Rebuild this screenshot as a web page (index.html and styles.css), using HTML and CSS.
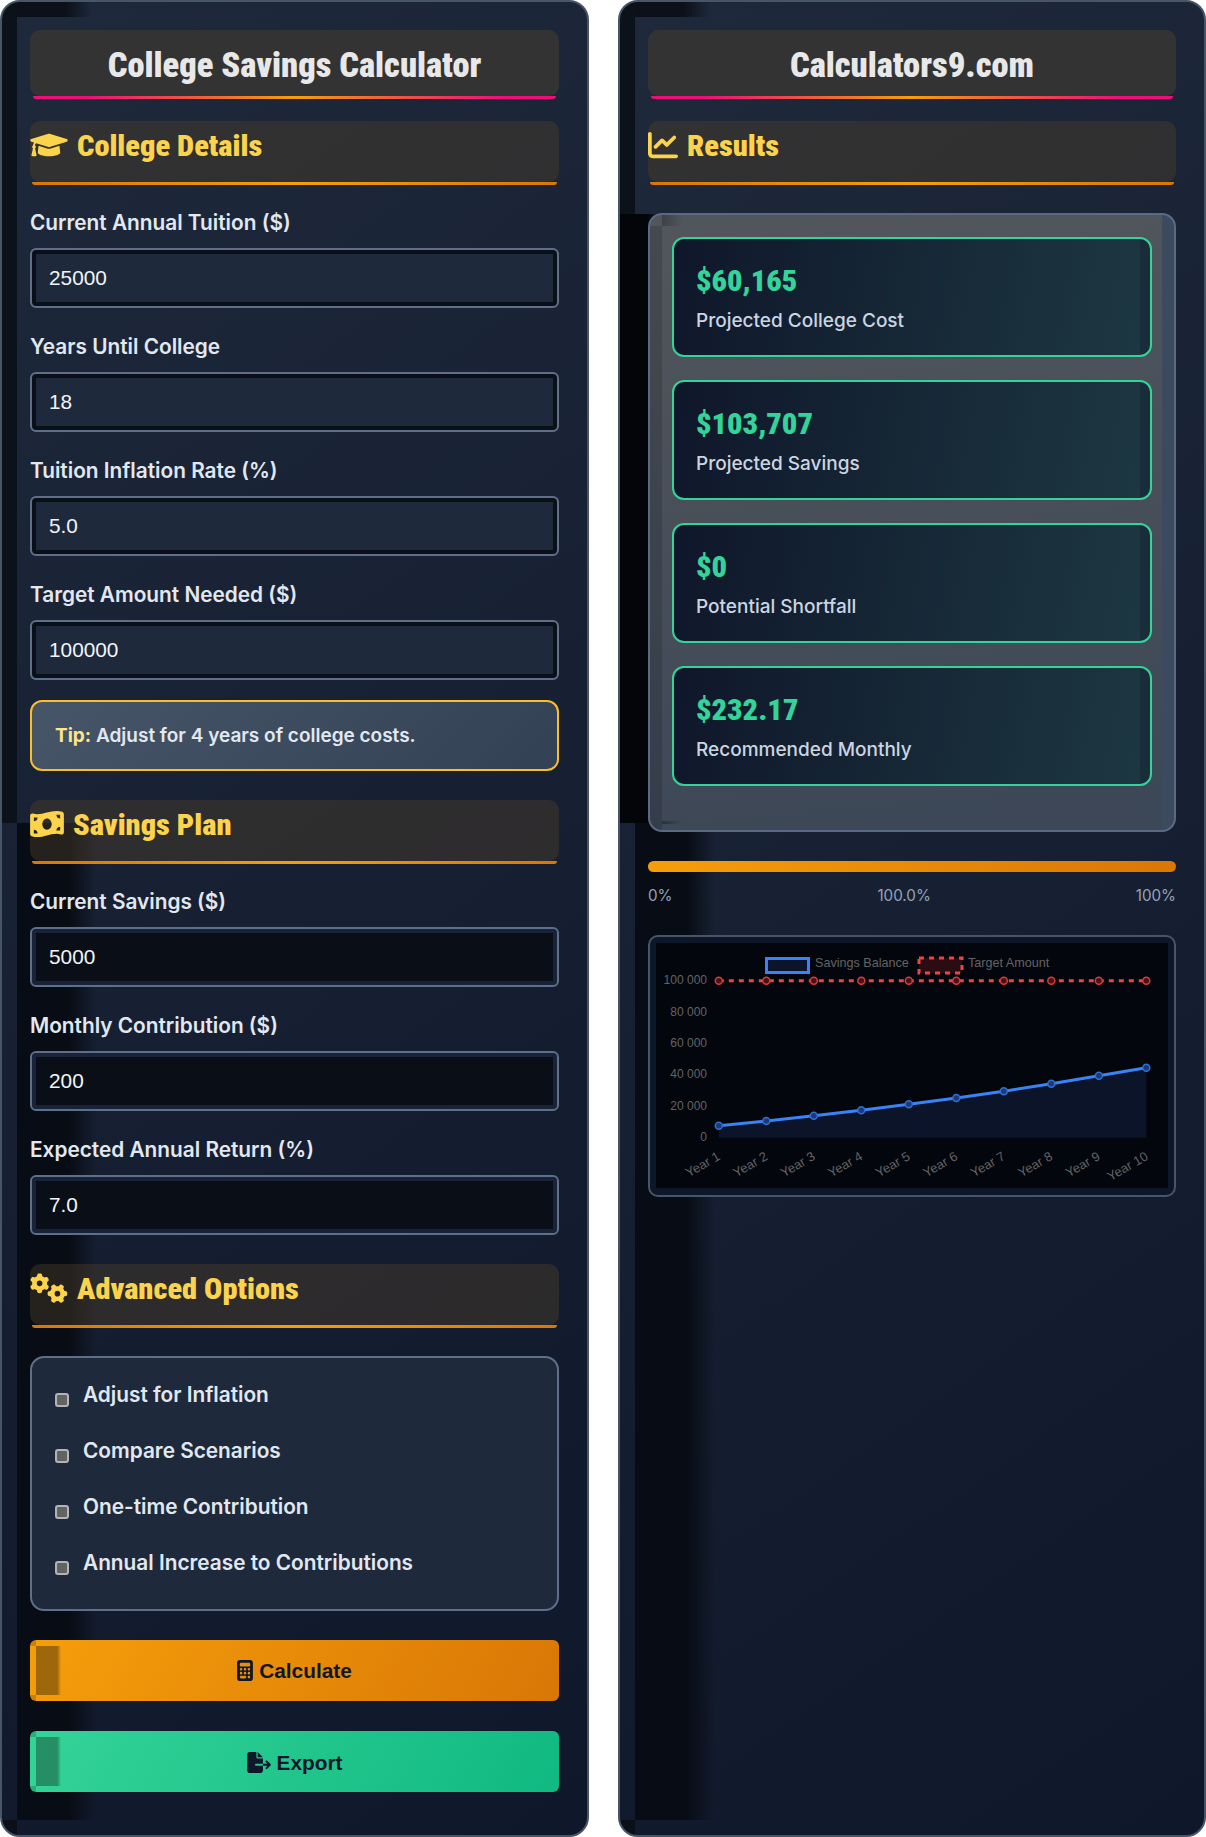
FILE: index.html
```html
<!DOCTYPE html>
<html lang="en">
<head>
<meta charset="utf-8">
<title>College Savings Calculator</title>
<link rel="stylesheet" href="styles.css">
</head>
<body>
<main class="layout">
  <section class="panel panel-form">
    <h1 class="title">College Savings Calculator</h1>

    <h2 class="section-head">
      <svg class="ico" viewBox="0 0 640 512" width="38" height="30"><path d="M622.34 153.2L343.4 67.5c-15.2-4.67-31.6-4.67-46.79 0L17.66 153.2c-23.54 7.23-23.54 38.36 0 45.59l48.63 14.94c-10.67 13.19-17.23 29.28-17.88 46.9C38.78 266.15 32 276.11 32 288c0 10.78 5.68 19.85 13.86 25.65L20.33 428.53C18.11 438.52 25.71 448 35.94 448h56.11c10.24 0 17.84-9.48 15.62-19.47L82.14 313.65C90.32 307.85 96 298.78 96 288c0-11.57-6.47-21.25-15.66-26.87.76-15.02 8.44-28.3 20.69-36.72L296.6 284.5c9.06 2.78 26.44 6.25 46.79 0l278.95-85.7c23.55-7.24 23.55-38.36 0-45.6zM352.79 315.09c-28.53 8.76-52.84 3.92-65.59 0l-145.02-44.55L128 384c0 35.35 85.96 64 192 64s192-28.65 192-64l-14.18-113.47-145.03 44.56z"/></svg>
      College Details
    </h2>
    <div class="field"><label class="label">Current Annual Tuition ($)</label><input class="input" value="25000"></div>
    <div class="field"><label class="label">Years Until College</label><input class="input" value="18"></div>
    <div class="field"><label class="label">Tuition Inflation Rate (%)</label><input class="input" value="5.0"></div>
    <div class="field"><label class="label">Target Amount Needed ($)</label><input class="input" value="100000"></div>
    <p class="tip"><strong class="tip-key">Tip:</strong> Adjust for 4 years of college costs.</p>

    <h2 class="section-head section-savings">
      <svg class="ico" viewBox="0 0 576 512" width="34" height="30"><path d="M0 112.5V422.3c0 18 10.1 35 27 41.3c87 32.5 174 10.3 261-11.9c79.8-20.3 159.6-40.7 239.3-18.4c23 6.4 48.7-9.5 48.7-33.4V89.7c0-18-10.1-35-27-41.3C462 15.9 375 38.1 288 60.3C208.2 80.6 128.4 100.9 48.7 78.6C25.6 72.2 0 88.1 0 112.5zM288 352c-44.2 0-80-43-80-96s35.8-96 80-96s80 43 80 96s-35.8 96-80 96zM64 352c35.3 0 64 28.7 64 64H64V352zm64-208c0 35.3-28.7 64-64 64V144h64zM512 304v64H448c0-35.3 28.7-64 64-64zM448 96h64v64c-35.3 0-64-28.7-64-64z"/></svg>
      Savings Plan
    </h2>
    <div class="field"><label class="label">Current Savings ($)</label><input class="input input-dark" value="5000"></div>
    <div class="field"><label class="label">Monthly Contribution ($)</label><input class="input input-dark" value="200"></div>
    <div class="field"><label class="label">Expected Annual Return (%)</label><input class="input input-dark" value="7.0"></div>

    <h2 class="section-head section-advanced">
      <svg class="ico" viewBox="0 0 640 512" width="38" height="30"><path d="M308.5 135.3c7.1-6.3 9.9-16.2 6.2-25c-2.3-5.3-4.8-10.5-7.6-15.5L304 89.4c-3-5-6.3-9.9-9.8-14.6c-5.7-7.6-15.7-10.1-24.7-7.1l-28.2 9.3c-10.7-8.8-23-16-36.2-20.9L199 27.1c-1.9-9.3-9.1-16.7-18.5-17.8C173.9 8.4 167.2 8 160.4 8h-.7c-6.8 0-13.5 .4-20.1 1.2c-9.4 1.1-16.6 8.6-18.5 17.8L115 56.1c-13.3 5-25.5 12.1-36.2 20.9L50.5 67.8c-9-3-19-.5-24.7 7.1c-3.5 4.7-6.8 9.6-9.9 14.6l-3 5.3c-2.8 5-5.3 10.2-7.6 15.6c-3.7 8.7-.9 18.6 6.2 25l22.2 19.8C32.6 161.9 32 168.9 32 176s.6 14.1 1.7 20.9L11.5 216.7c-7.1 6.3-9.9 16.2-6.2 25c2.3 5.3 4.8 10.5 7.6 15.6l3 5.2c3 5.1 6.3 9.9 9.9 14.6c5.7 7.6 15.7 10.1 24.7 7.1l28.2-9.3c10.7 8.8 23 16 36.2 20.9l6.1 29.1c1.9 9.3 9.1 16.7 18.5 17.8c6.7 .8 13.5 1.2 20.4 1.2s13.7-.4 20.4-1.2c9.4-1.1 16.6-8.6 18.5-17.8l6.1-29.1c13.3-5 25.5-12.1 36.2-20.9l28.2 9.3c9 3 19 .5 24.7-7.1c3.5-4.7 6.8-9.5 9.8-14.6l3.1-5.4c2.8-5 5.3-10.2 7.6-15.5c3.7-8.7 .9-18.6-6.2-25l-22.2-19.8c1.1-6.8 1.7-13.8 1.7-20.9s-.6-14.1-1.7-20.9l22.2-19.8zM112 176a48 48 0 1 1 96 0 48 48 0 1 1 -96 0zM504.7 500.5c6.3 7.1 16.2 9.9 25 6.2c5.3-2.3 10.5-4.8 15.5-7.6l5.4-3.1c5-3 9.9-6.3 14.6-9.8c7.6-5.7 10.1-15.7 7.1-24.7l-9.3-28.2c8.8-10.7 16-23 20.9-36.2l29.1-6.1c9.3-1.9 16.7-9.1 17.8-18.5c.8-6.7 1.2-13.5 1.2-20.4s-.4-13.7-1.2-20.4c-1.1-9.4-8.6-16.6-17.8-18.5L583.9 307c-5-13.3-12.1-25.5-20.9-36.2l9.3-28.2c3-9 .5-19-7.1-24.7c-4.7-3.5-9.6-6.8-14.6-9.9l-5.3-3c-5-2.8-10.2-5.3-15.6-7.6c-8.7-3.7-18.6-.9-25 6.2l-19.8 22.2c-6.8-1.1-13.8-1.7-20.9-1.7s-14.1 .6-20.9 1.7l-19.8-22.2c-6.3-7.1-16.2-9.9-25-6.2c-5.3 2.3-10.5 4.8-15.6 7.6l-5.2 3c-5.1 3-9.9 6.3-14.6 9.9c-7.6 5.7-10.1 15.7-7.1 24.7l9.3 28.2c-8.8 10.7-16 23-20.9 36.2L315.1 313c-9.3 1.9-16.7 9.1-17.8 18.5c-.8 6.7-1.2 13.5-1.2 20.4s.4 13.7 1.2 20.4c1.1 9.4 8.6 16.6 17.8 18.5l29.1 6.1c5 13.3 12.1 25.5 20.9 36.2l-9.3 28.2c-3 9-.5 19 7.1 24.7c4.7 3.5 9.5 6.8 14.6 9.8l5.4 3.1c5 2.8 10.2 5.3 15.5 7.6c8.7 3.7 18.6 .9 25-6.2l19.8-22.2c6.8 1.1 13.8 1.7 20.9 1.7s14.1-.6 20.9-1.7l19.8 22.2zM464 304a48 48 0 1 1 0 96 48 48 0 1 1 0-96z"/></svg>
      Advanced Options
    </h2>
    <div class="options">
      <label class="option"><input class="check" type="checkbox">Adjust for Inflation</label>
      <label class="option"><input class="check" type="checkbox">Compare Scenarios</label>
      <label class="option"><input class="check" type="checkbox">One-time Contribution</label>
      <label class="option"><input class="check" type="checkbox">Annual Increase to Contributions</label>
    </div>

    <button class="btn btn-calc">
      <svg class="btn-ico" viewBox="0 0 384 512" width="16" height="21"><path d="M64 0C28.7 0 0 28.7 0 64V448c0 35.3 28.7 64 64 64H320c35.3 0 64-28.7 64-64V64c0-35.3-28.7-64-64-64H64zM96 64H288c17.7 0 32 14.3 32 32v32c0 17.7-14.3 32-32 32H96c-17.7 0-32-14.3-32-32V96c0-17.7 14.3-32 32-32zm32 160a32 32 0 1 1 -64 0 32 32 0 1 1 64 0zM96 352a32 32 0 1 1 0-64 32 32 0 1 1 0 64zM64 416c0-17.7 14.3-32 32-32h96c17.7 0 32 14.3 32 32s-14.3 32-32 32H96c-17.7 0-32-14.3-32-32zM192 256a32 32 0 1 1 0-64 32 32 0 1 1 0 64zm32 64a32 32 0 1 1 -64 0 32 32 0 1 1 64 0zm64-64a32 32 0 1 1 0-64 32 32 0 1 1 0 64zm32 64a32 32 0 1 1 -64 0 32 32 0 1 1 64 0zM288 448a32 32 0 1 1 0-64 32 32 0 1 1 0 64z"/></svg>
      Calculate
    </button>
    <button class="btn btn-export">
      <svg class="btn-ico" viewBox="0 0 576 512" width="24" height="21"><path d="M0 64C0 28.7 28.7 0 64 0H224V128c0 17.7 14.3 32 32 32H384V288H216c-13.3 0-24 10.7-24 24s10.7 24 24 24H384V448c0 35.3-28.7 64-64 64H64c-35.3 0-64-28.7-64-64V64zM384 336V288H494.1l-39-39c-9.4-9.4-9.4-24.6 0-33.9s24.6-9.4 33.9 0l80 80c9.4 9.4 9.4 24.6 0 33.9l-80 80c-9.4 9.4-24.6 9.4-33.9 0s-9.4-24.6 0-33.9l39-39H384zm0-208H256V0L384 128z"/></svg>
      Export
    </button>
  </section>

  <section class="panel panel-results">
    <h2 class="title">Calculators9.com</h2>
    <h2 class="section-head">
      <svg class="ico" viewBox="0 0 512 512" width="30" height="30"><path d="M64 64c0-17.7-14.3-32-32-32S0 46.3 0 64V400c0 44.2 35.8 80 80 80H480c17.7 0 32-14.3 32-32s-14.3-32-32-32H80c-8.8 0-16-7.2-16-16V64zm406.6 86.6c12.5-12.5 12.5-32.8 0-45.3s-32.8-12.5-45.3 0L320 210.7l-57.4-57.4c-12.5-12.5-32.8-12.5-45.3 0l-112 112c-12.5 12.5-12.5 32.8 0 45.3s32.8 12.5 45.3 0L240 221.3l57.4 57.4c12.5 12.5 32.8 12.5 45.3 0l128-128z"/></svg>
      Results
    </h2>
    <div class="results">
      <div class="card"><div class="card-value">$60,165</div><div class="card-label">Projected College Cost</div></div>
      <div class="card"><div class="card-value">$103,707</div><div class="card-label">Projected Savings</div></div>
      <div class="card"><div class="card-value">$0</div><div class="card-label">Potential Shortfall</div></div>
      <div class="card"><div class="card-value">$232.17</div><div class="card-label">Recommended Monthly</div></div>
    </div>
    <div class="progress"></div>
    <div class="progress-labels"><span>0%</span><span>100.0%</span><span>100%</span></div>
    <div class="chart">
      <svg class="chart-svg" viewBox="1 -1 524 258" width="524" height="258">
        <rect class="c-plot" x="7" y="5" width="512" height="245"/>
        <polygon class="c-area" points="69.8,187.7 117.3,183 164.8,177.7 212.3,172.3 259.8,166.3 307.3,160 354.8,153.3 402.3,145.7 449.8,137.7 497.3,129.7 497.3,199.7 69.8,199.7"/>
        <g class="c-text">
          <rect class="c-leg-blue" x="117.5" y="20.5" width="42" height="14"/>
          <text class="c-leg" x="166" y="29">Savings Balance</text>
          <rect class="c-leg-red" x="270" y="20" width="43" height="15"/>
          <text class="c-leg" x="319" y="29">Target Amount</text>
          <g class="c-y">
            <text x="58" y="46">100 000</text>
            <text x="58" y="78">80 000</text>
            <text x="58" y="109">60 000</text>
            <text x="58" y="140">40 000</text>
            <text x="58" y="172">20 000</text>
            <text x="58" y="203">0</text>
          </g>
          <g class="c-x">
            <text transform="translate(72 221) rotate(-30)">Year 1</text>
            <text transform="translate(119.5 221) rotate(-30)">Year 2</text>
            <text transform="translate(167 221) rotate(-30)">Year 3</text>
            <text transform="translate(214.5 221) rotate(-30)">Year 4</text>
            <text transform="translate(262 221) rotate(-30)">Year 5</text>
            <text transform="translate(309.5 221) rotate(-30)">Year 6</text>
            <text transform="translate(357 221) rotate(-30)">Year 7</text>
            <text transform="translate(404.5 221) rotate(-30)">Year 8</text>
            <text transform="translate(452 221) rotate(-30)">Year 9</text>
            <text transform="translate(500 221) rotate(-30)">Year 10</text>
          </g>
        </g>
        <line class="c-target" x1="69.8" y1="42.7" x2="497.3" y2="42.7"/>
        <g class="c-dots-red">
          <circle cx="69.8" cy="42.7" r="3.5"/><circle cx="117.3" cy="42.7" r="3.5"/><circle cx="164.8" cy="42.7" r="3.5"/><circle cx="212.3" cy="42.7" r="3.5"/><circle cx="259.8" cy="42.7" r="3.5"/><circle cx="307.3" cy="42.7" r="3.5"/><circle cx="354.8" cy="42.7" r="3.5"/><circle cx="402.3" cy="42.7" r="3.5"/><circle cx="449.8" cy="42.7" r="3.5"/><circle cx="497.3" cy="42.7" r="3.5"/>
        </g>
        <polyline class="c-line" points="69.8,187.7 117.3,183 164.8,177.7 212.3,172.3 259.8,166.3 307.3,160 354.8,153.3 402.3,145.7 449.8,137.7 497.3,129.7"/>
        <g class="c-dots-blue">
          <circle cx="69.8" cy="187.7" r="3.5"/><circle cx="117.3" cy="183" r="3.5"/><circle cx="164.8" cy="177.7" r="3.5"/><circle cx="212.3" cy="172.3" r="3.5"/><circle cx="259.8" cy="166.3" r="3.5"/><circle cx="307.3" cy="160" r="3.5"/><circle cx="354.8" cy="153.3" r="3.5"/><circle cx="402.3" cy="145.7" r="3.5"/><circle cx="449.8" cy="137.7" r="3.5"/><circle cx="497.3" cy="129.7" r="3.5"/>
        </g>
      </svg>
    </div>
  </section>
</main>
</body>
</html>
```
FILE: styles.css
```css
* { box-sizing: border-box; }
html, body { margin: 0; padding: 0; background: #fff; }
body { font-family: Inter, "Liberation Sans", sans-serif; color: #e2e8f0; }

.layout {
  display: grid;
  grid-template-columns: 589px 588px;
  column-gap: 29px;
  min-height: 1837px;
}

.panel {
  border: 2px solid #475569;
  border-radius: 20px;
  padding: 28px 28px 0;
  background:
    linear-gradient(90deg, #0c1119 0, #0c1119 65%, rgba(12,17,25,0) 100%) 15px 0 / 75px 15px no-repeat,
    linear-gradient(#0b121a, #0b121a) 0 0 / 15px 821px no-repeat,
    linear-gradient(90deg, #080c14 0, #080c14 65%, rgba(8,12,20,0) 100%) 15px 821px / 80px 997px no-repeat,
    linear-gradient(#0b0f18, #0b0f18) 0 1818px / 15px 15px no-repeat,
    linear-gradient(145deg, #1e293b 0%, #0f172a 100%);
}
.panel-results {
  background:
    linear-gradient(90deg, #030509 0, #030509 70%, rgba(3,5,9,0) 100%) 0 212px / 40px 609px no-repeat,
    linear-gradient(90deg, #0c1119 0, #0c1119 65%, rgba(12,17,25,0) 100%) 15px 0 / 75px 15px no-repeat,
    linear-gradient(#0b121a, #0b121a) 0 0 / 15px 821px no-repeat,
    linear-gradient(90deg, #080c14 0, #080c14 65%, rgba(8,12,20,0) 100%) 15px 821px / 80px 997px no-repeat,
    linear-gradient(#0b0f18, #0b0f18) 0 1818px / 15px 15px no-repeat,
    linear-gradient(145deg, #1e293b 0%, #0f172a 100%);
}

.title {
  position: relative;
  margin: 0 0 25px;
  height: 66px;
  line-height: 70px;
  border-radius: 10px;
  background: #333;
  text-align: center;
  font-family: "Roboto Condensed", Roboto, sans-serif;
  font-stretch: 75%;
  font-weight: 900;
  font-size: 34.5px;
  color: #e8e8e8;
}
.title::after {
  content: "";
  position: absolute;
  left: 3px;
  right: 3px;
  bottom: -3px;
  height: 3px;
  border-radius: 0 0 6px 6px;
  background: linear-gradient(90deg, #ec0f7a 0%, #ec0f7a 10%, #f59e0b 50%, #ec0f7a 90%, #ec0f7a 100%);
}

.section-head {
  position: relative;
  display: flex;
  align-items: center;
  gap: 9px;
  height: 61px;
  margin: 0 0 22px;
  padding: 3px 0 16px;
  border-radius: 10px;
  background: rgba(82, 66, 40, .4);
  font-family: "Roboto Condensed", Roboto, sans-serif;
  font-stretch: 75%;
  font-weight: 900;
  font-size: 30.4px;
  color: #fcd34d;
}
.section-head::after {
  content: "";
  position: absolute;
  left: 2px;
  right: 2px;
  bottom: -3px;
  height: 3px;
  border-radius: 0 0 6px 6px;
  background: linear-gradient(90deg, #d97706 0%, #f59e0b 50%, #d97706 100%);
}
.section-savings { margin-top: 29px; }
.section-advanced { margin-top: 29px; margin-bottom: 31px; }
.ico { fill: #fcd34d; flex: none; }

.field { padding-top: 6px; margin-bottom: 20px; }
.label {
  display: block;
  height: 26px;
  line-height: 25px;
  margin-bottom: 12px;
  font-size: 20.8px;
  font-weight: 600;
  color: #e2e8f0;
}
.input {
  display: block;
  width: 100%;
  height: 60px;
  padding: 0 17px;
  border: 2px solid #5f6f8a;
  border-radius: 6px;
  background: #1e293b;
  box-shadow: inset 0 0 0 4px #0a1018;
  font-family: "Liberation Sans", sans-serif;
  font-size: 20.8px;
  color: #f1f5f9;
  outline: none;
}
.input-dark {
  background: #0a0f17;
  box-shadow: inset 0 0 0 4px #18233a;
}

.tip {
  margin: 0;
  height: 71px;
  padding: 0 23px;
  line-height: 67px;
  border: 2px solid #fbbf24;
  border-radius: 12px;
  background: linear-gradient(135deg, #475569, #334155);
  font-size: 19px;
  font-weight: 600;
  color: #e2e8f0;
}
.tip-key { color: #fde68a; font-weight: 700; }

.options {
  display: grid;
  row-gap: 29.7px;
  padding: 24px 23px 33px;
  border: 2px solid #5f6f8a;
  border-radius: 14px;
  background: #1e293b;
  height: 255px;
}
.option {
  display: flex;
  align-items: flex-start;
  height: 26px;
  line-height: 26px;
  font-size: 20.8px;
  font-weight: 600;
  color: #e2e8f0;
}
.check {
  appearance: none;
  flex: none;
  width: 14px;
  height: 14px;
  margin: 11px 14px 0 0;
  border: 2.5px solid #b4b4b4;
  border-radius: 3px;
  background: #636363;
}

.btn {
  display: flex;
  align-items: center;
  justify-content: center;
  gap: 6px;
  width: 100%;
  height: 61px;
  margin-top: 29px;
  border: 0;
  border-radius: 6px;
  font-family: "Liberation Sans", sans-serif;
  font-size: 20.8px;
  font-weight: 700;
  color: #0f172a;
}
.btn-export { margin-top: 30px; padding-top: 3px; }
.btn-ico { fill: #0f172a; flex: none; }
.btn-calc {
  background:
    linear-gradient(90deg, rgba(40,30,10,.42) 0, rgba(40,30,10,.42) 85%, rgba(40,30,10,0) 100%) 6px 6px / 25px 49px no-repeat,
    linear-gradient(rgba(0,0,0,.18), rgba(0,0,0,.18)) 0 0 / 6px 6px no-repeat,
    linear-gradient(rgba(0,0,0,.18), rgba(0,0,0,.18)) 0 55px / 6px 6px no-repeat,
    linear-gradient(120deg, #f59e0b 0%, #d97706 100%);
}
.btn-export {
  background:
    linear-gradient(90deg, rgba(20,50,30,.42) 0, rgba(20,50,30,.42) 85%, rgba(20,50,30,0) 100%) 6px 6px / 25px 49px no-repeat,
    linear-gradient(rgba(0,0,0,.18), rgba(0,0,0,.18)) 0 0 / 6px 6px no-repeat,
    linear-gradient(rgba(0,0,0,.18), rgba(0,0,0,.18)) 0 55px / 6px 6px no-repeat,
    linear-gradient(120deg, #34d399 0%, #10b981 100%);
}

.results {
  margin-top: 31px;
  height: 619px;
  padding: 22px 22px 0;
  border: 2px solid #5a6a84;
  border-radius: 14px;
  background:
    linear-gradient(90deg, rgba(15,15,20,.3), rgba(15,15,20,0)) 12px 0 / 20px 11px no-repeat,
    linear-gradient(rgba(0,0,0,.15), rgba(0,0,0,.15)) 0 11px / 12px 100% no-repeat,
    linear-gradient(90deg, rgba(15,15,20,.4), rgba(15,15,20,0)) 12px 606px / 20px 3px no-repeat,
    linear-gradient(#3c4a60, #3c4a60) right 0 top 0 / 12px 100% no-repeat,
    linear-gradient(175deg, #52565c 0%, #3c4757 100%);
}
.card {
  height: 120px;
  margin-bottom: 23px;
  padding: 19px 22px 0;
  border: 2px solid #34d399;
  border-radius: 12px;
  background:
    linear-gradient(rgba(15,23,42,.3), rgba(15,23,42,.3)) right 0 top 0 / 10px 100% no-repeat,
    linear-gradient(100deg, #0f172a 0%, #1d3842 100%);
}
.card-value {
  height: 44px;
  line-height: 46px;
  font-family: "Roboto Condensed", Roboto, sans-serif;
  font-stretch: 75%;
  font-weight: 900;
  font-size: 30.4px;
  color: #34d399;
}
.card-label {
  margin-top: 6px;
  line-height: 26px;
  font-size: 19px;
  font-weight: 500;
  color: #cbd5e1;
}

.progress {
  height: 11px;
  margin-top: 29px;
  border-radius: 6px;
  background: linear-gradient(90deg, #f59e0b, #d97706);
}
.progress-labels {
  display: flex;
  justify-content: space-between;
  margin-top: 12px;
  line-height: 24px;
  font-size: 15.2px;
  color: #94a3b8;
}
.chart {
  height: 262px;
  margin-top: 27px;
  border: 2px solid #475569;
  border-radius: 10px;
  background: #0e172a;
  overflow: hidden;
}
.chart-svg { display: block; }
.c-plot { fill: #03060d; }
.c-area { fill: #0b1428; }
.c-text text { font-family: "Liberation Sans", sans-serif; fill: #636363; }
.c-text .c-leg { font-size: 12.6px; }
.c-y text { text-anchor: end; font-size: 12px; }
.c-x text { text-anchor: end; font-size: 13px; }
.c-leg-blue { fill: #0b1428; stroke: #3b82f6; stroke-width: 3; }
.c-leg-red { fill: #2a0c12; stroke: #ef4444; stroke-width: 3; stroke-dasharray: 5 5; }
.c-target { stroke: #ef4444; stroke-width: 3; stroke-dasharray: 5 5; }
.c-dots-red circle { fill: #4a1218; stroke: #d93a3a; stroke-width: 1.5; }
.c-line { fill: none; stroke: #3b82f6; stroke-width: 3; }
.c-dots-blue circle { fill: #1b3a78; stroke: #2f6fd6; stroke-width: 1.5; }
```
